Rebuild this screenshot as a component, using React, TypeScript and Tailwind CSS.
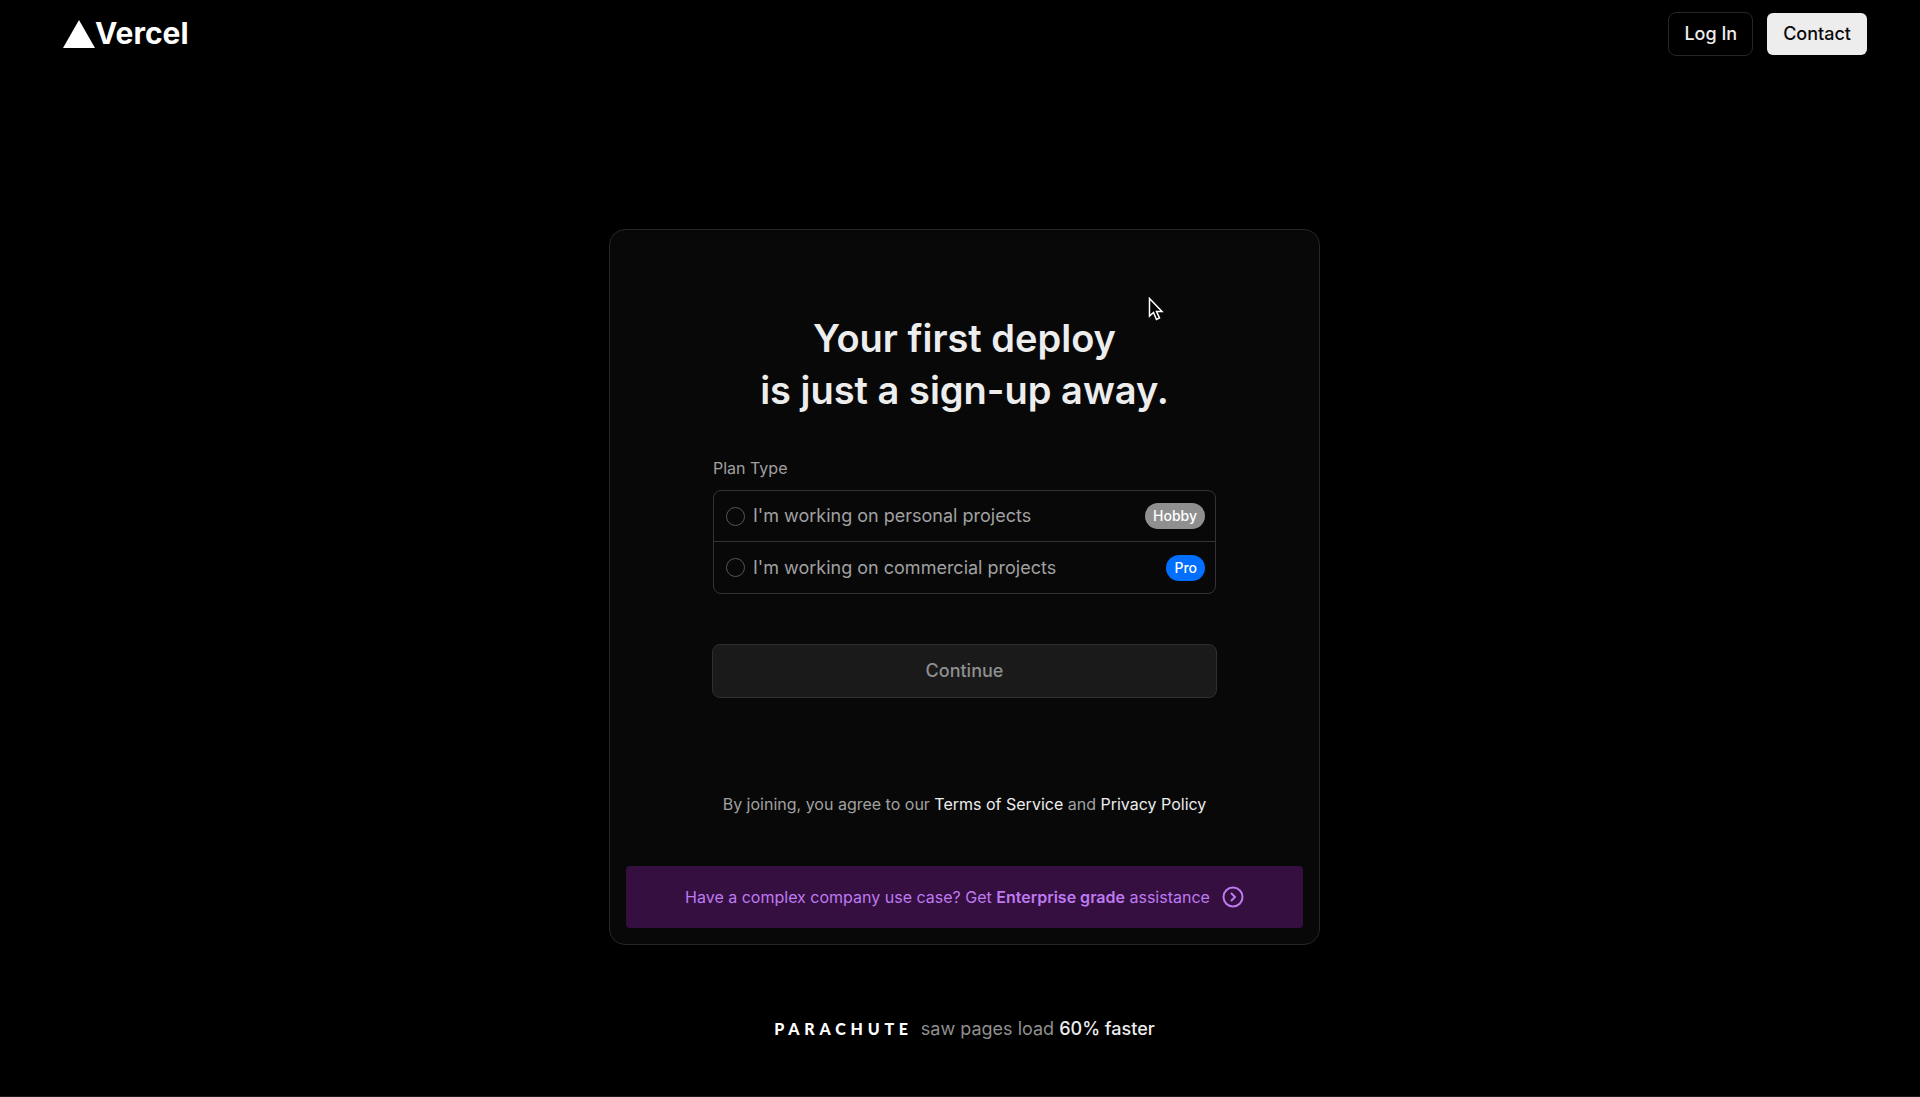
import { useState } from "react";

const plans = [
  { id: "hobby", label: "I'm working on personal projects", badge: "Hobby", badgeClass: "bg-[#8f8f8f]" },
  { id: "pro", label: "I'm working on commercial projects", badge: "Pro", badgeClass: "bg-[#006efe]" },
];

function Header() {
  return (
    <header className="flex h-[68px] items-center justify-between pr-[53px] pl-[63px]">
      <a href="#" aria-label="Vercel home" className="flex items-center text-white">
        <svg width="32" height="28" viewBox="0 0 32 28" fill="currentColor" aria-hidden="true">
          <path d="M16 0L32 28H0Z" />
        </svg>
        <span className="pb-0.5 text-3xl leading-7 font-bold">Vercel</span>
      </a>
      <nav className="flex items-center gap-3.5">
        <a href="#" className="flex h-11 items-center rounded-lg border border-[#262626] px-[15px] text-lg font-medium text-[#ededed]">Log In</a>
        <a href="#" className="flex h-[42px] items-center rounded-md bg-[#ededed] px-4 text-lg font-medium text-[#0a0a0a]">Contact</a>
      </nav>
    </header>
  );
}

function PlanPicker({ value, onChange }: { value: string; onChange: (id: string) => void }) {
  return (
    <fieldset className="mx-px">
      <legend className="mb-3 text-base leading-5 text-[#a1a1a1]">Plan Type</legend>
      <div className="divide-y divide-[#333] rounded-lg border border-[#333]">
        {plans.map((plan) => (
          <label key={plan.id} className="flex h-[51px] items-center gap-2 pr-2.5 pl-3 text-[#a1a1a1]">
            <input
              type="radio"
              name="plan"
              value={plan.id}
              checked={value === plan.id}
              onChange={() => onChange(plan.id)}
              className="size-[19px] appearance-none rounded-full border border-[#555] checked:border-4 checked:border-white"
            />
            <span className="grow text-lg">{plan.label}</span>
            <span className={`flex h-[26px] items-center rounded-full px-2 text-sm font-medium text-white ${plan.badgeClass}`}>
              {plan.badge}
            </span>
          </label>
        ))}
      </div>
    </fieldset>
  );
}

function Pointer() {
  return (
    <svg className="absolute top-[67px] right-[155px]" width="16" height="24" viewBox="0 0 16 24" aria-hidden="true">
      <path d="M1.5 1.5V19L5.5 15.5L8.5 22.5L11.5 21L8.5 14.5H14Z" fill="#000" stroke="#fff" strokeWidth="1.5" />
    </svg>
  );
}

export default function App() {
  const [plan, setPlan] = useState("");
  return (
    <div className="flex min-h-screen flex-col border-b border-[#1c1c1c] bg-black font-['Inter',sans-serif]">
      <Header />
      <main className="mt-[161px] ml-[9px] flex flex-col items-center">
        <section className="relative w-full max-w-[711px] rounded-2xl border border-[#262626] bg-[#080808] p-4">
          <Pointer />
          <form className="px-[86px]" onSubmit={(e) => e.preventDefault()}>
            <h1 className="mt-[66px] text-center text-[38px] leading-[52px] font-semibold text-[#ededed]">
              Your first deploy
              <br />
              is just a sign-up away.
            </h1>
            <div className="mt-[42px]">
              <PlanPicker value={plan} onChange={setPlan} />
            </div>
            <button type="submit" disabled={!plan} className="mt-[50px] h-[54px] w-full rounded-lg border border-[#2e2e2e] bg-[#1a1a1a] text-lg font-medium text-[#8f8f8f]">
              Continue
            </button>
          </form>
          <p className="mt-[94px] text-center text-base text-[#a1a1a1]">
            By joining, you agree to our <a href="#" className="text-[#ededed]">Terms of Service</a> and{" "}
            <a href="#" className="text-[#ededed]">Privacy Policy</a>
          </p>
          <a href="#" className="mt-[50px] flex h-[62px] items-center justify-center gap-3 rounded bg-[#340f40] text-base text-[#bf7af0]">
            <span>Have a complex company use case? Get <span className="font-semibold">Enterprise grade</span> assistance</span>
            <svg width="22" height="22" viewBox="0 0 22 22" fill="none" stroke="currentColor" strokeWidth="2" aria-hidden="true">
              <circle cx="11" cy="11" r="9.5" />
              <path d="M9 7L13 11L9 15" />
            </svg>
          </a>
        </section>
        <p className="mt-[70px] flex items-center gap-2 text-lg text-[#8f8f8f]">
          <span className="font-['Lato',sans-serif] text-base font-black tracking-[0.3em] text-white">PARACHUTE</span>
          <span>saw pages load <span className="font-medium text-[#ededed]">60% faster</span></span>
        </p>
      </main>
    </div>
  );
}
